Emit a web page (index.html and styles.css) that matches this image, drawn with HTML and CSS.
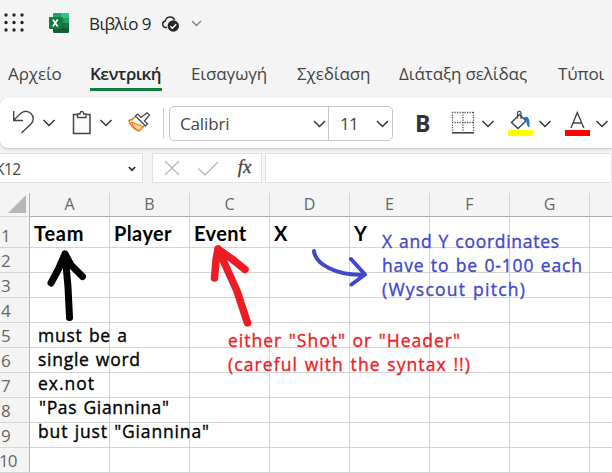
FILE: index.html
```
<!DOCTYPE html>
<html lang="el">
<head>
<meta charset="utf-8">
<title>Βιβλίο 9</title>
<link rel="stylesheet" href="styles.css">
</head>
<body>
<div class="app">
  <header class="titlebar">
    <svg class="launcher" width="20" height="20" viewBox="0 0 20 20" fill="#262626"><circle cx="2" cy="2" r="1.7"/><circle cx="10" cy="2" r="1.7"/><circle cx="18" cy="2" r="1.7"/><circle cx="2" cy="9.5" r="1.7"/><circle cx="10" cy="9.5" r="1.7"/><circle cx="18" cy="9.5" r="1.7"/><circle cx="2" cy="17" r="1.7"/><circle cx="10" cy="17" r="1.7"/><circle cx="18" cy="17" r="1.7"/></svg>
    <svg class="excel" width="20" height="20" viewBox="0 0 20 20"><rect x="4" width="16" height="20" rx="1.5" fill="#185c37"/><path d="M5.500 0H12V5H4V1.500Q4 0 5.500 0Z" fill="#21a366"/><path d="M12 0H18.500Q20 0 20 1.500V5H12Z" fill="#33c481"/><path d="M4 5H12V10H4Z" fill="#107c41"/><path d="M12 5H20V10H12Z" fill="#21a366"/><path d="M12 10H20V15H12Z" fill="#107c41"/><path d="M4 4H13.500Q14.500 4 14.500 5V17H4Z" fill="#0b4427" opacity=".35"/><rect y="4" width="13" height="12" rx="1" fill="#107c41"/><path d="M3.800 6.500L8.700 13.500M8.700 6.500L3.800 13.500" stroke="#fff" stroke-width="1.700"/></svg>
    <span class="doc">Βιβλίο 9</span>
    <svg class="cloud" width="19" height="18" viewBox="0 0 19 18"><path d="M6 12.500H4.500A3.300 3.300 0 0 1 4.300 6A5 5 0 0 1 13.800 5" fill="none" stroke="#262626" stroke-width="1.400"/><circle cx="12.300" cy="11" r="5.700" fill="#262626"/><path d="M9.300 11.200L11.400 13.200L15.200 9.200" fill="none" stroke="#fff" stroke-width="1.400"/></svg>
    <svg class="title-chev" width="11" height="7" viewBox="0 0 11 7"><path d="M1 1L5.500 5.500L10 1"/></svg>
  </header>
  <nav class="tabs">
    <span class="tab t1">Αρχείο</span><span class="tab t2 active">Κεντρική</span><span class="tab t3">Εισαγωγή</span><span class="tab t4">Σχεδίαση</span><span class="tab t5">Διάταξη σελίδας</span><span class="tab t6">Τύποι</span>
  </nav>
  <section class="toolbar">
    <svg class="tools-left" width="169" height="50" viewBox="0 0 169 50" fill="none">
      <path d="M13.700 13V22.500H23M14 22L20.500 15.500C24 12.500 28 12.800 31 15.500C34 18.500 34 23 31 26L21.500 35" stroke="#444" stroke-width="1.400"/>
      <path class="chev" d="M43.500 22L49 27.500L54.500 22"/>
      <path d="M77 16.500H73.500V35.500H90V16.500H86.500" fill="#fafafa" stroke="#444" stroke-width="1.500"/><path d="M77.500 19.500V16H80Q80 13.500 81.800 13.500T83.600 16H86V19.500Z" fill="#fff" stroke="#444" stroke-width="1.300"/>
      <path class="chev" d="M100.500 22L106 27.500L111.500 22"/>
      <path d="M129 22.500Q133 21.500 136 18.500L145 27L139 33Q131 30 129 22.500Z" fill="#fff" stroke="#e8750d" stroke-width="1.400"/><path d="M131 24L143 28.500L139 33Q134 31 131 24Z" fill="#fbd28b" stroke="#e8750d" stroke-width="1"/><path d="M135.500 18L137.500 16L141 19.500L147 14.700L149.500 17L144.500 23L147.500 26L145.500 28Z" fill="#fff" stroke="#444" stroke-width="1.200"/>
      <path d="M163.500 10V40" stroke="#ccc"/>
    </svg>
    <div class="fontbox">
      <div class="fname"><span>Calibri</span><svg width="13" height="8" viewBox="0 0 13 8"><path class="chev" d="M1 1L6.500 6.500L12 1"/></svg></div>
      <div class="fsize"><span>11</span><svg width="13" height="8" viewBox="0 0 13 8"><path class="chev" d="M1 1L6.500 6.500L12 1"/></svg></div>
    </div>
    <b class="bold">B</b>
    <svg class="tools-right" width="172" height="50" viewBox="440 98 172 50" fill="none">
      <path d="M452.500 112V131M463 112V131M473.500 112V131M452 112.500H474M452 122.500H474" stroke="#555" stroke-width="1.300" stroke-dasharray="1.300 1.200"/><path d="M452 132.800H474" stroke="#444" stroke-width="1.600"/>
      <path class="chev" d="M482.500 121L488 126.500L493.500 121"/>
      <path d="M511.500 122.500L519.500 114.500L526 121L518 128.500Z" fill="#fafafa" stroke="#444" stroke-width="1.400"/><path d="M517.500 118.500V113Q517.500 111.300 519.200 111.300T521 113V119" stroke="#444" stroke-width="1.200"/><path d="M522.500 118Q529 114.500 529.500 122V127Q526.500 127 526.500 121Z" fill="#1b74c5"/>
      <rect x="508" y="130" width="25" height="6" fill="#ff0"/>
      <path class="chev" d="M539.500 121L545 126.500L550.500 121"/>
      <path d="M571 128L577.300 112.500L583.800 128M573 123H581.700" stroke="#444" stroke-width="1.400"/>
      <rect x="565" y="130" width="25" height="6" fill="#f00"/>
      <path class="chev" d="M596.500 121L602 126.500L607.500 121"/>
    </svg>
  </section>
  <section class="formula">
    <div class="namebox"><span>K12</span><svg width="8" height="6" viewBox="0 0 8 6"><path d="M.8 1L4 4.200L7.200 1" fill="none" stroke="#333" stroke-width="1.700"/></svg></div>
    <div class="fx"><svg width="56" height="18" viewBox="0 0 56 18" fill="none" stroke="#b5b5b5" stroke-width="1.300"><path d="M1 2L15 16M15 2L1 16M34.500 9.500L41 16L54 3"/></svg><i>fx</i></div>
    <div class="input"></div>
  </section>
  <main class="sheet">
    <div class="corner"><svg width="18" height="18" viewBox="0 0 18 18"><path d="M18 0V18H0Z" fill="#b7b7b7"/></svg></div>
    <div class="col">A</div><div class="col">B</div><div class="col">C</div><div class="col">D</div><div class="col">E</div><div class="col">F</div><div class="col">G</div><div class="col"></div>
    <div class="row first">1</div><div class="cell team">Team</div><div class="cell player">Player</div><div class="cell event">Event</div><div class="cell">X</div><div class="cell">Y</div><div class="cell"></div><div class="cell"></div><div class="cell"></div>
    <div class="row">2</div><div class="cell"></div><div class="cell"></div><div class="cell"></div><div class="cell"></div><div class="cell"></div><div class="cell"></div><div class="cell"></div><div class="cell"></div>
    <div class="row">3</div><div class="cell"></div><div class="cell"></div><div class="cell"></div><div class="cell"></div><div class="cell"></div><div class="cell"></div><div class="cell"></div><div class="cell"></div>
    <div class="row">4</div><div class="cell"></div><div class="cell"></div><div class="cell"></div><div class="cell"></div><div class="cell"></div><div class="cell"></div><div class="cell"></div><div class="cell"></div>
    <div class="row">5</div><div class="cell"></div><div class="cell"></div><div class="cell"></div><div class="cell"></div><div class="cell"></div><div class="cell"></div><div class="cell"></div><div class="cell"></div>
    <div class="row">6</div><div class="cell"></div><div class="cell"></div><div class="cell"></div><div class="cell"></div><div class="cell"></div><div class="cell"></div><div class="cell"></div><div class="cell"></div>
    <div class="row">7</div><div class="cell"></div><div class="cell"></div><div class="cell"></div><div class="cell"></div><div class="cell"></div><div class="cell"></div><div class="cell"></div><div class="cell"></div>
    <div class="row">8</div><div class="cell"></div><div class="cell"></div><div class="cell"></div><div class="cell"></div><div class="cell"></div><div class="cell"></div><div class="cell"></div><div class="cell"></div>
    <div class="row">9</div><div class="cell"></div><div class="cell"></div><div class="cell"></div><div class="cell"></div><div class="cell"></div><div class="cell"></div><div class="cell"></div><div class="cell"></div>
    <div class="row last">10</div><div class="cell"></div><div class="cell"></div><div class="cell"></div><div class="cell"></div><div class="cell"></div><div class="cell"></div><div class="cell"></div><div class="cell"></div>
  </main>
  <svg class="notes" width="612" height="473" viewBox="0 0 612 473">
    <g fill="none" stroke-linecap="round" stroke-linejoin="round">
      <path d="M69.500 317.500L68 287L65 254M51 283L58 270L65 254L71 265L82.500 276.500" stroke="#000" stroke-width="7"/>
      <path d="M247.500 323L237 291L218 249M214.500 278L216 260L218 249L232 259L245 269.500" stroke="#ed1c24" stroke-width="7.500"/>
      <path d="M314 251C315 264 337 276 364 274.500M351 259L365 274.500L351.500 284.500" stroke="#3f48cc" stroke-width="4"/>
    </g>
    <g class="black"><text x="38" y="342" textLength="89">must be a</text><text x="38" y="366" textLength="102">single word</text><text x="38" y="390" textLength="56">ex.not</text><text x="39" y="414" textLength="130">"Pas Giannina"</text><text x="38" y="438" textLength="171">but just "Giannina"</text></g>
    <g class="red"><text x="228" y="347" textLength="232">either "Shot" or "Header"</text><text x="228" y="371" textLength="242">(careful with the syntax !!)</text></g>
    <g class="blue"><text x="382" y="248" textLength="177">X and Y coordinates</text><text x="382" y="272" textLength="200">have to be 0-100 each</text><text x="382" y="296" textLength="143">(Wyscout pitch)</text></g>
  </svg>
</div>
</body>
</html>
```
FILE: styles.css
```
* { box-sizing: border-box; }
body { margin: 0; overflow: hidden; background: #f4f4f4; font-family: "Open Sans", "Noto Sans", sans-serif; color: #444; }
.app { position: relative; width: 612px; height: 473px; overflow: hidden; }
svg { display: block; flex: none; }
.chev { fill: none; stroke: #333; stroke-width: 1.5; }
.titlebar { height: 48px; display: flex; align-items: center; padding-left: 4px; }
.launcher { margin-top: -3px; }
.excel { margin: -2px 0 0 25px; }
.doc { width: 72px; margin-left: 20px; font-size: 17px; line-height: 24px; letter-spacing: -.6px; color: #262626; white-space: nowrap; }
.cloud { margin-top: -1px; }
.title-chev { margin: -1px 0 0 11px; fill: none; stroke: #8a8078; stroke-width: 1.3; }
.tabs { height: 50px; display: grid; grid-template-columns: 82px 101px 106px 102px 159px 60px; padding-left: 8px; font-size: 17px; line-height: 26px; letter-spacing: -.1px; padding-top: 13px; white-space: nowrap; }
.tab { height: 30px; justify-self: start; }
.active { font-weight: 600; color: #262626; border-bottom: 3px solid #107c41; width: 72px; letter-spacing: -.5px; }
.toolbar { height: 50px; display: flex; align-items: center; background: #fff; border-radius: 8px 0 0 8px; box-shadow: 0 1px 3px #bbb; clip-path: inset(0 0 -5px 0); }
.fontbox { width: 224px; height: 35px; border: 1px solid #c8c8c8; border-radius: 5px; display: flex; font-size: 17px; margin-top: 1px; }
.fname, .fsize { display: flex; align-items: center; justify-content: space-between; }
.fname { width: 159px; padding: 0 2px 0 10px; border-right: 1px solid #c8c8c8; letter-spacing: -.15px; }
.fsize { width: 63px; padding: 0 3px 0 11px; letter-spacing: -.8px; }
.bold { width: 47px; padding-left: 22px; font-size: 23px; line-height: 40px; color: #333; }
.formula { height: 45px; display: flex; padding-top: 5px; }
.namebox, .fx, .input { height: 30px; background: #fff; border: 1px solid #e1e1e1; display: flex; align-items: center; }
.namebox { width: 150px; margin-left: -6px; justify-content: space-between; padding-right: 6px; font-size: 15.5px; letter-spacing: -.5px; padding-top: 2px; }
.fx { width: 111px; margin-left: 9px; padding-left: 11px; }
.fx i { font: italic 400 19px "Liberation Serif", serif; -webkit-text-stroke: .3px #444; margin: -3px 0 0 18px; }
.input { width: 350px; margin-left: 3px; }
.sheet { width: 670px; display: grid; grid-template-columns: 30px repeat(8, 80px); grid-template-rows: 24px 31px repeat(9, 25px); }
.corner, .row { border-right: 1px solid #b5b5b5; }
.corner { padding: 2px 0 0 8px; border-bottom: 1px solid #d4d4d4; }
.col { text-align: center; font-size: 16px; line-height: 23px; color: #666; border-right: 1px solid #d4d4d4; border-bottom: 1px solid #ababab; }
.row { display: flex; align-items: flex-end; padding-left: 1px; font-size: 17px; line-height: 22px; color: #666; border-bottom: 1px solid #d4d4d4; letter-spacing: -1px; }
.last { padding-left: 0; text-indent: -1px; }
.cell { background: #fff; border-right: 1px solid #d4d4d4; border-bottom: 1px solid #d4d4d4; padding-left: 4px; font: 700 20px/32px Lato, sans-serif; color: #000; white-space: nowrap; }
.team { letter-spacing: .8px; }
.player, .event { letter-spacing: .4px; }
.notes { position: absolute; left: 0; top: 0; font: 500 17.5px "Open Sans", sans-serif; }
.black { fill: #000; } .red { fill: #ed1c24; } .blue { fill: #3f48cc; }
.notes text { stroke-width: .35px; word-spacing: 1px; }
.black text { stroke: #000; } .red text { stroke: #ed1c24; } .blue text { stroke: #3f48cc; }
```
